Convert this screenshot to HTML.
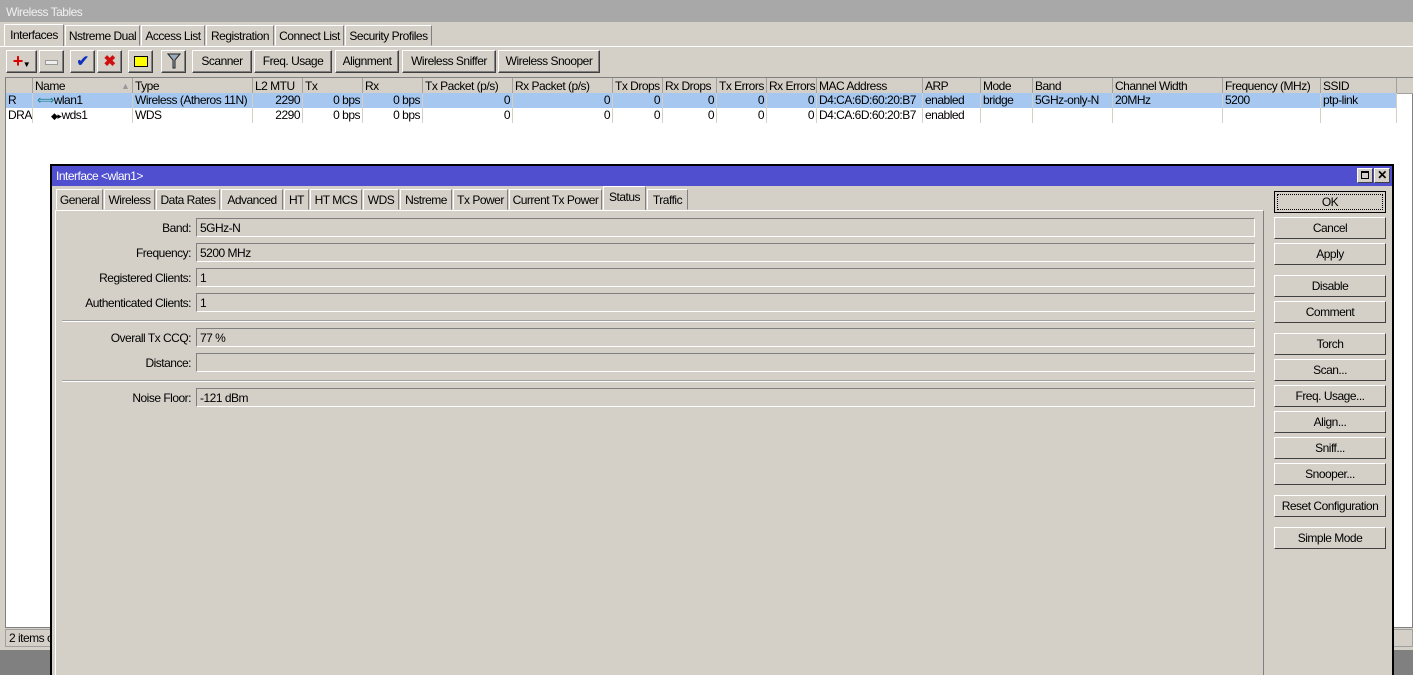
<!DOCTYPE html>
<html><head><meta charset="utf-8"><style>
*{box-sizing:border-box;margin:0;padding:0}
body{width:1413px;height:675px;overflow:hidden;background:#808080;font-family:"Liberation Sans",sans-serif;font-size:12px;color:#000;position:relative;letter-spacing:-0.5px}
.a{position:absolute;white-space:nowrap}
.btn{position:absolute;background:#d4d0c8;border:1px solid;border-color:#fff #404040 #404040 #fff;box-shadow:inset -1px -1px #808080;text-align:center;line-height:21px;height:23px}
.tab{position:absolute;top:0;height:21px;border:1px solid;border-color:#fff #808080 #d4d0c8 #fff;line-height:20px;text-align:center;background:#d4d0c8}
.col{position:absolute;top:0;height:16px;border-right:1px solid #a0a0a0;padding-left:2px;line-height:16px;overflow:hidden}
.cell{position:absolute;height:15px;line-height:15px;overflow:hidden;padding:0 2px;border-right:1px solid #d4d0c8}
.r{text-align:right}
.lbl{position:absolute;left:56px;width:135px;text-align:right;height:19px;line-height:20px}
.fld{position:absolute;left:196px;width:1059px;height:19px;border:1px solid;border-color:#808080 #fff #fff #808080;line-height:18px;padding-left:3px}
.dbtn{position:absolute;left:1274px;width:112px;height:22px;background:#d4d0c8;border:1px solid;border-color:#fff #404040 #404040 #fff;text-align:center;line-height:20px}
.sep{position:absolute;left:62px;width:1193px;height:2px;border-top:1px solid #a0a0a0;border-bottom:1px solid #fff}
</style></head><body>
<div class="a" style="left:0;top:0;width:1413px;height:650px;background:#d4d0c8"></div>
<div class="a" style="left:0;top:0;width:1413px;height:22px;background:#a8a8a8;color:#f0f0f0;padding-left:6px;line-height:24px">Wireless Tables</div>
<div class="a" style="left:0;top:25px;width:1413px;height:22px">
<div class="tab" style="left:4px;width:60px;top:-1px;height:23px;border-bottom:none">Interfaces</div>
<div class="tab" style="left:65px;width:75px">Nstreme Dual</div>
<div class="tab" style="left:141px;width:64px">Access List</div>
<div class="tab" style="left:206px;width:68px">Registration</div>
<div class="tab" style="left:275px;width:69px">Connect List</div>
<div class="tab" style="left:345px;width:87px">Security Profiles</div>
</div>
<div class="a" style="left:0;top:46px;width:1413px;border-top:1px solid #fff"></div>
<div class="btn" style="left:6px;top:50px;width:31px"><span style="color:#d00;font-weight:bold;font-size:18px;line-height:20px">+</span><span style="font-size:8px">▼</span></div>
<div class="btn" style="left:39px;top:50px;width:25px"><div style="margin:9px auto;width:13px;height:5px;border:1px solid #999;background:#eee"></div></div>
<div class="btn" style="left:70px;top:50px;width:25px;color:#1030c0;font-size:15px;font-weight:bold">✔</div>
<div class="btn" style="left:97px;top:50px;width:25px;color:#d01010;font-size:15px;font-weight:bold">✖</div>
<div class="btn" style="left:128px;top:50px;width:25px"><div style="margin:5px auto;width:14px;height:11px;background:#ff0;border:1px solid #000"></div></div>
<div class="btn" style="left:161px;top:50px;width:25px"><svg width="14" height="16" viewBox="0 0 14 16" style="margin-top:2px"><path d="M1 1H13L8 7V15H6V7Z" fill="#9ab" stroke="#222"/></svg></div>
<div class="btn" style="left:192px;top:50px;width:60px">Scanner</div>
<div class="btn" style="left:254px;top:50px;width:78px">Freq. Usage</div>
<div class="btn" style="left:335px;top:50px;width:64px">Alignment</div>
<div class="btn" style="left:402px;top:50px;width:94px">Wireless Sniffer</div>
<div class="btn" style="left:498px;top:50px;width:102px">Wireless Snooper</div>
<div class="a" style="left:5px;top:77px;width:1408px;height:551px;background:#fff;border:1px solid #808080"></div>
<div class="a" style="left:6px;top:78px;width:1407px;height:16px;background:#d4d0c8;border-bottom:1px solid #a0a0a0">
<div class="col" style="left:0;width:27px"></div>
<div class="col" style="left:27px;width:100px">Name<span style="position:absolute;left:88px;color:#999;font-size:9px">▲</span></div>
<div class="col" style="left:127px;width:120px">Type</div>
<div class="col" style="left:247px;width:50px">L2 MTU</div>
<div class="col" style="left:297px;width:60px">Tx</div>
<div class="col" style="left:357px;width:60px">Rx</div>
<div class="col" style="left:417px;width:90px">Tx Packet (p/s)</div>
<div class="col" style="left:507px;width:100px">Rx Packet (p/s)</div>
<div class="col" style="left:607px;width:50px">Tx Drops</div>
<div class="col" style="left:657px;width:54px">Rx Drops</div>
<div class="col" style="left:711px;width:50px">Tx Errors</div>
<div class="col" style="left:761px;width:50px">Rx Errors</div>
<div class="col" style="left:811px;width:106px">MAC Address</div>
<div class="col" style="left:917px;width:58px">ARP</div>
<div class="col" style="left:975px;width:52px">Mode</div>
<div class="col" style="left:1027px;width:80px">Band</div>
<div class="col" style="left:1107px;width:110px">Channel Width</div>
<div class="col" style="left:1217px;width:98px">Frequency (MHz)</div>
<div class="col" style="left:1315px;width:76px">SSID</div>
</div>
<div class="a" style="left:6px;top:93px;width:1391px;height:15px;background:#a6c8f0"></div>
<div class="a" style="left:6px;top:93px;width:1407px;height:30px">
<div class="cell" style="left:0;top:0;width:27px">R</div><div class="cell" style="left:27px;top:0;width:100px;padding-left:4px"><span style="color:#1a7a8a">⟺</span>wlan1</div><div class="cell" style="left:127px;top:0;width:120px">Wireless (Atheros 11N)</div><div class="cell r" style="left:247px;top:0;width:50px">2290</div><div class="cell r" style="left:297px;top:0;width:60px">0 bps</div><div class="cell r" style="left:357px;top:0;width:60px">0 bps</div><div class="cell r" style="left:417px;top:0;width:90px">0</div><div class="cell r" style="left:507px;top:0;width:100px">0</div><div class="cell r" style="left:607px;top:0;width:50px">0</div><div class="cell r" style="left:657px;top:0;width:54px">0</div><div class="cell r" style="left:711px;top:0;width:50px">0</div><div class="cell r" style="left:761px;top:0;width:50px">0</div><div class="cell" style="left:811px;top:0;width:106px">D4:CA:6D:60:20:B7</div><div class="cell" style="left:917px;top:0;width:58px">enabled</div><div class="cell" style="left:975px;top:0;width:52px">bridge</div><div class="cell" style="left:1027px;top:0;width:80px">5GHz-only-N</div><div class="cell" style="left:1107px;top:0;width:110px">20MHz</div><div class="cell" style="left:1217px;top:0;width:98px">5200</div><div class="cell" style="left:1315px;top:0;width:76px">ptp-link</div>
<div class="cell" style="left:0;top:15px;width:27px">DRA</div><div class="cell" style="left:27px;top:15px;width:100px;padding-left:18px"><span style="font-size:9px">◆▸</span>wds1</div><div class="cell" style="left:127px;top:15px;width:120px">WDS</div><div class="cell r" style="left:247px;top:15px;width:50px">2290</div><div class="cell r" style="left:297px;top:15px;width:60px">0 bps</div><div class="cell r" style="left:357px;top:15px;width:60px">0 bps</div><div class="cell r" style="left:417px;top:15px;width:90px">0</div><div class="cell r" style="left:507px;top:15px;width:100px">0</div><div class="cell r" style="left:607px;top:15px;width:50px">0</div><div class="cell r" style="left:657px;top:15px;width:54px">0</div><div class="cell r" style="left:711px;top:15px;width:50px">0</div><div class="cell r" style="left:761px;top:15px;width:50px">0</div><div class="cell" style="left:811px;top:15px;width:106px">D4:CA:6D:60:20:B7</div><div class="cell" style="left:917px;top:15px;width:58px">enabled</div><div class="cell" style="left:975px;top:15px;width:52px"></div><div class="cell" style="left:1027px;top:15px;width:80px"></div><div class="cell" style="left:1107px;top:15px;width:110px"></div><div class="cell" style="left:1217px;top:15px;width:98px"></div><div class="cell" style="left:1315px;top:15px;width:76px"></div>
</div>
<div class="a" style="left:5px;top:629px;width:1408px;height:18px;background:#d4d0c8;border:1px solid #a0a0a0;padding-left:3px;line-height:17px">2 items o</div>

<div class="a" style="left:50px;top:164px;width:1344px;height:511px;background:#d4d0c8;border:2px solid #000;border-bottom:none"></div>
<div class="a" style="left:52px;top:166px;width:1340px;height:20px;background:#4f4fcf;color:#fff;padding-left:4px;line-height:21px">Interface &lt;wlan1&gt;</div>
<div class="a" style="left:1357px;top:168px;width:16px;height:15px;background:#d4d0c8;border:1px solid #fff;border-color:#fff #404040 #404040 #fff"><div style="margin:2px 3px;width:8px;height:8px;border:1px solid #000;border-top-width:2px"></div></div>
<div class="a" style="left:1374px;top:168px;width:16px;height:15px;background:#d4d0c8;border:1px solid;border-color:#fff #404040 #404040 #fff;font-size:12px;font-weight:bold;text-align:center;line-height:13px">✕</div>
<div class="a" style="left:0;top:189px;width:1413px;height:22px">
<div class="tab" style="left:56px;width:47px">General</div>
<div class="tab" style="left:104px;width:51px">Wireless</div>
<div class="tab" style="left:156px;width:64px">Data Rates</div>
<div class="tab" style="left:221px;width:62px">Advanced</div>
<div class="tab" style="left:284px;width:25px">HT</div>
<div class="tab" style="left:310px;width:52px">HT MCS</div>
<div class="tab" style="left:363px;width:36px">WDS</div>
<div class="tab" style="left:400px;width:52px">Nstreme</div>
<div class="tab" style="left:453px;width:55px">Tx Power</div>
<div class="tab" style="left:509px;width:93px">Current Tx Power</div>
<div class="tab" style="left:603px;width:43px;top:-3px;height:25px;border-bottom:none">Status</div>
<div class="tab" style="left:647px;width:41px">Traffic</div>
</div>
<div class="a" style="left:55px;top:210px;width:1209px;height:465px;border-left:1px solid #fff;border-top:1px solid #fff;border-right:1px solid #808080"></div>
<div class="lbl" style="top:218px">Band:</div><div class="fld" style="top:218px">5GHz-N</div>
<div class="lbl" style="top:243px">Frequency:</div><div class="fld" style="top:243px">5200 MHz</div>
<div class="lbl" style="top:268px">Registered Clients:</div><div class="fld" style="top:268px">1</div>
<div class="lbl" style="top:293px">Authenticated Clients:</div><div class="fld" style="top:293px">1</div>
<div class="sep" style="top:320px"></div>
<div class="lbl" style="top:328px">Overall Tx CCQ:</div><div class="fld" style="top:328px">77 %</div>
<div class="lbl" style="top:353px">Distance:</div><div class="fld" style="top:353px"></div>
<div class="sep" style="top:380px"></div>
<div class="lbl" style="top:388px">Noise Floor:</div><div class="fld" style="top:388px">-121 dBm</div>
<div class="dbtn" style="top:191px;border:1px solid #000;outline:1px dotted #000;outline-offset:-4px">OK</div>
<div class="dbtn" style="top:217px">Cancel</div>
<div class="dbtn" style="top:243px">Apply</div>
<div class="dbtn" style="top:275px">Disable</div>
<div class="dbtn" style="top:301px">Comment</div>
<div class="dbtn" style="top:333px">Torch</div>
<div class="dbtn" style="top:359px">Scan...</div>
<div class="dbtn" style="top:385px">Freq. Usage...</div>
<div class="dbtn" style="top:411px">Align...</div>
<div class="dbtn" style="top:437px">Sniff...</div>
<div class="dbtn" style="top:463px">Snooper...</div>
<div class="dbtn" style="top:495px">Reset Configuration</div>
<div class="dbtn" style="top:527px">Simple Mode</div>
</body></html>
